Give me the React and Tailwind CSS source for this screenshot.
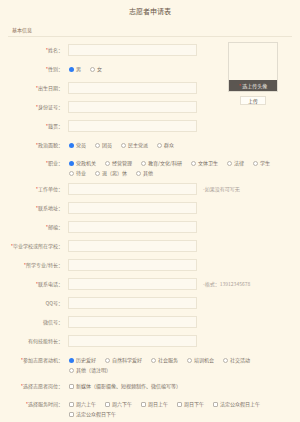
import React from "react";

const font = { fontFamily: '"Noto Sans CJK SC", "Noto Sans", sans-serif' };

function Label({ text, req }) {
  return (
    <div className="w-[55px] shrink-0 text-right text-[5px] leading-[10px] text-[#857a6f] whitespace-nowrap">
      {req && <span className="text-[#e2483b]">*</span>}
      {text}：
    </div>
  );
}

function Input() {
  return <div className="ml-[5px] w-[129px] h-3 border border-[#ebe4d2] bg-[#fdf9ef]" />;
}

function Radio({ label, checked }) {
  return (
    <div className="flex items-center mr-[9px] h-[10px]">
      {checked ? (
        <span className="w-[5px] h-[5px] rounded-full bg-[#2d7cf4] mr-[2px]" />
      ) : (
        <span className="w-[5px] h-[5px] rounded-full border border-[#b9b4ac] bg-white mr-[2px]" />
      )}
      <span className="text-[5px] leading-[10px] text-[#7a7066] whitespace-nowrap">{label}</span>
    </div>
  );
}

function Check({ label }) {
  return (
    <div className="flex items-center mr-[9px] h-[10px]">
      <span className="w-[5px] h-[5px] rounded-[1px] border border-[#b9b4ac] bg-white mr-[2px]" />
      <span className="text-[5px] leading-[10px] text-[#7a7066] whitespace-nowrap">{label}</span>
    </div>
  );
}

function InputRow({ label, req, hint }) {
  return (
    <div className="flex items-center h-3">
      <Label text={label} req={req} />
      <Input />
      {hint && <span className="ml-[6px] text-[5px] text-[#aaa199] whitespace-nowrap">{hint}</span>}
    </div>
  );
}

function OptionRow({ label, req, items, checked, box, height, pad }) {
  return (
    <div className={`flex items-start ${height} ${pad}`}>
      <Label text={label} req={req} />
      <div className="ml-[6px] w-[216px] flex flex-wrap">
        {items.map((it, i) =>
          box ? <Check key={it} label={it} /> : <Radio key={it} label={it} checked={i === checked} />
        )}
      </div>
    </div>
  );
}

export default function App() {
  return (
    <div className="w-[300px] h-[422px] overflow-hidden bg-[#fdf7e8] px-2" style={font}>
      <div className="h-[22px] flex items-center justify-center text-[7px] text-[#6b5848]">
        志愿者申请表
      </div>

      <div className="h-[15px] flex items-end pb-[2px] pl-1 border-b border-[#ece5d3] text-[5px] leading-[8px] text-[#8c6f57]">
        基本信息
      </div>

      <div className="mt-[5px] flex">
        <div className="w-[220px] pt-[2px] flex flex-col gap-[7px]">
          <InputRow label="姓名" req />
          <OptionRow label="性别" req items={["男", "女"]} checked={0} height="h-3" pad="pt-[1px]" />
          <InputRow label="出生日期" req />
          <InputRow label="身份证号" req />
          <InputRow label="籍贯" req />
        </div>

        <div className="w-[50px] flex flex-col items-center">
          <div className="w-[50px] h-[50px] border border-[#e1dccf] bg-[#fdf8ea] flex flex-col justify-end">
            <div className="h-[11px] bg-[#5b5651] flex items-center justify-center text-[5px] text-[#eeeae4]">
              <span className="text-[#e2483b] mr-[1px]">*</span>选上传头像
            </div>
          </div>
          <div className="mt-1 w-[26px] h-[9px] border border-[#e6e0d2] bg-[#fffdf7] flex items-center justify-center text-[5px] text-[#5a5048]">
            上传
          </div>
        </div>
      </div>

      <div className="mt-[7px] flex flex-col gap-[7px]">
        <OptionRow
          label="政治面貌"
          req
          items={["党员", "团员", "民主党派", "群众"]}
          checked={0}
          height="h-3"
          pad="pt-[1px]"
        />
        <OptionRow
          label="职业"
          req
          items={["党政机关", "经营管理", "教育/文化/科研", "文体卫生", "法律", "学生", "待业", "退（离）休", "其他"]}
          checked={0}
          height="h-[18px]"
          pad="pt-[0px]"
        />
        <InputRow label="工作单位" req hint="-如果没有可写无" />
        <InputRow label="联系地址" req />
        <InputRow label="邮编" req />
        <InputRow label="毕业学校或所在学校" req />
        <InputRow label="所学专业/特长" req />
        <InputRow label="联系电话" req hint="-格式：13912345678" />
        <InputRow label="QQ号" />
        <InputRow label="微信号" />
        <InputRow label="有何技能特长" />
        <OptionRow
          label="参加志愿者动机"
          req
          items={["历史爱好", "自然科学爱好", "社会服务", "培训机会", "社交活动", "其他（请注明）"]}
          checked={0}
          height="h-[19px]"
          pad="pt-[1px]"
        />
        <OptionRow
          label="选择志愿者岗位"
          req
          box
          items={["新媒体（摄影摄像、短视频制作、微信编写等）"]}
          height="h-3"
          pad="pt-[1px]"
        />
        <OptionRow
          label="选择服务时间"
          req
          box
          items={["周六上午", "周六下午", "周日上午", "周日下午", "法定公众假日上午", "法定公众假日下午"]}
          height="h-[20px]"
          pad="pt-0"
        />
      </div>
    </div>
  );
}
